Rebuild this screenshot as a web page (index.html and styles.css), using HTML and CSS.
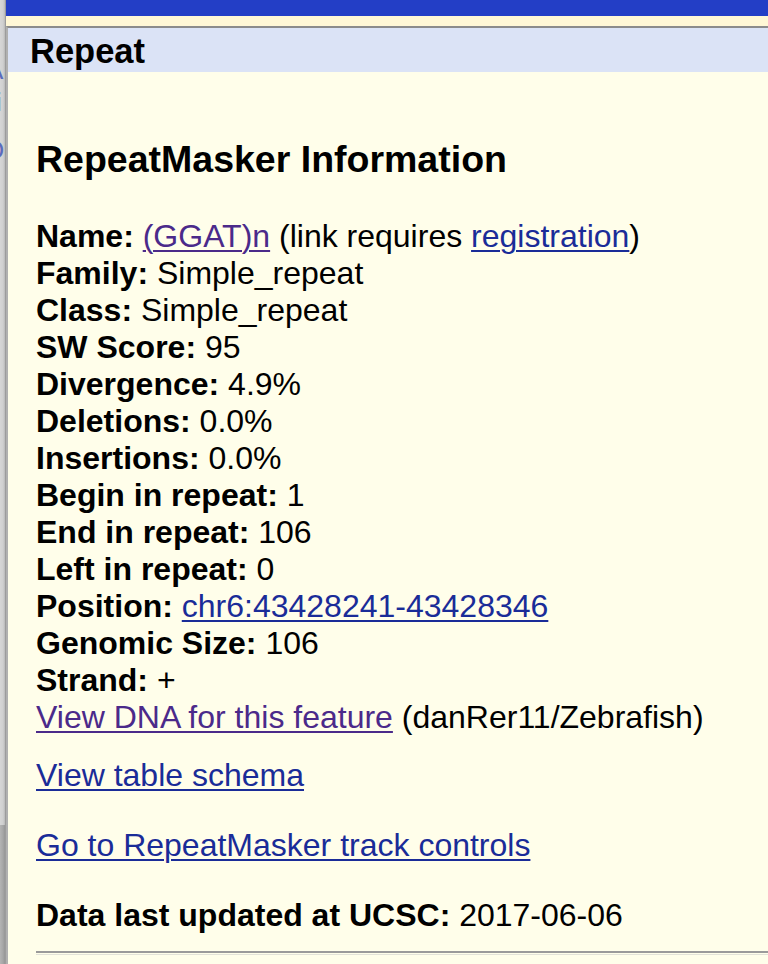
FILE: index.html
```html
<!DOCTYPE html>
<html>
<head>
<meta charset="utf-8">
<title>Repeat</title>
<link rel="stylesheet" href="styles.css">
</head>
<body>
<div class="page">
  <div class="side">
    <div class="side-top">
      <div class="ghost g1">A</div>
      <div class="ghost g2">i</div>
      <div class="ghost g3">O</div>
    </div>
    <div class="side-bottom"></div>
  </div>
  <div class="dialog">
    <div class="topbar"></div>
    <div class="strip"></div>
    <div class="frame">
      <div class="header">Repeat</div>
      <div class="content">
        <h2 class="title">RepeatMasker Information</h2>
        <div class="info">
          <div><b>Name:</b> <a class="visited" href="#">(GGAT)n</a> (link requires <a class="link" href="#">registration</a>)</div>
          <div><b>Family:</b> Simple_repeat</div>
          <div><b>Class:</b> Simple_repeat</div>
          <div><b>SW Score:</b> 95</div>
          <div><b>Divergence:</b> 4.9%</div>
          <div><b>Deletions:</b> 0.0%</div>
          <div><b>Insertions:</b> 0.0%</div>
          <div><b>Begin in repeat:</b> 1</div>
          <div><b>End in repeat:</b> 106</div>
          <div><b>Left in repeat:</b> 0</div>
          <div><b>Position:</b> <a class="link" href="#">chr6:43428241-43428346</a></div>
          <div><b>Genomic Size:</b> 106</div>
          <div><b>Strand:</b> +</div>
          <div><a class="visited" href="#">View DNA for this feature</a> (danRer11/Zebrafish)</div>
          <div class="schema"><a class="link" href="#">View table schema</a></div>
          <div class="controls"><a class="link" href="#">Go to RepeatMasker track controls</a></div>
          <div class="updated"><b>Data last updated at UCSC:</b> 2017-06-06</div>
        </div>
        <div class="rule"></div>
      </div>
    </div>
  </div>
</div>
</body>
</html>
```

FILE: styles.css
```css
html, body {
  margin: 0;
  padding: 0;
  height: 100%;
  overflow: hidden;
}

body {
  font-family: "Liberation Sans", Arial, Helvetica, sans-serif;
  color: #000;
  background: #fffeea;
}

.page {
  display: flex;
  height: 964px;
}

.side {
  width: 5px;
  display: flex;
  flex-direction: column;
  border-right: 1px solid #9c9c9c;
}

.side-top {
  height: 825px;
  background: linear-gradient(to right, #d6d6d6 0, #d0d0d0 3px, #b9b9b9 5px);
  overflow: hidden;
}

.side-bottom {
  flex: 1;
  background: linear-gradient(to right, #b4b4b4 0, #a6a6a6 3px, #969696 5px);
}

.ghost {
  font-size: 26px;
  line-height: 26px;
  color: #5a6bbd;
  white-space: nowrap;
}

.g1 { margin: 57px 0 0 -14px; }
.g2 { margin: 6px 0 0 -4px; }
.g3 { margin: 22px 0 0 -16px; }

.dialog {
  flex: 1;
  display: flex;
  flex-direction: column;
  background: #fffeea;
}

.topbar {
  height: 16px;
  background: #233ec6;
}

.strip {
  height: 10px;
  background: #fff7d6;
}

.frame {
  flex: 1;
  border-top: 2px solid #8b8b8b;
  border-left: 2px solid #b0b0b0;
}

.header {
  height: 44px;
  line-height: 46px;
  background: #dbe3f6;
  padding-left: 22px;
  font-size: 34.5px;
  font-weight: bold;
}

.content {
  padding-left: 28px;
}

.title {
  margin: 65px 0 37px;
  font-size: 37.5px;
  line-height: 44px;
  font-weight: bold;
}

.info {
  font-size: 32px;
  line-height: 37px;
}

a {
  text-decoration: underline;
  text-decoration-thickness: 2px;
  text-underline-offset: 3px;
}

.link { color: #1a2c98; }
.visited { color: #4b2a8a; }

.schema { margin-top: 21px; }
.controls { margin-top: 33px; }
.updated { margin-top: 33px; }

.rule {
  margin-top: 17px;
  height: 1px;
  border-top: 2px solid #9a9a9a;
  border-bottom: 1px solid #e2e2d8;
}
```
